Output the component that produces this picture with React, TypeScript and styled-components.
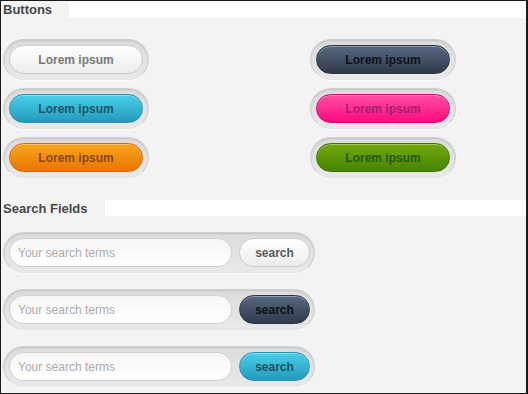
import styled, { createGlobalStyle, css } from "styled-components";

const Global = createGlobalStyle`
  html, body {
    margin: 0;
    padding: 0;
    background: #ffffff;
  }
  * {
    box-sizing: border-box;
  }
`;

const Page = styled.div`
  width: 528px;
  height: 394px;
  border: 1px solid #1a1a1a;
  border-right-width: 2px;
  background: #f3f3f3;
  font-family: "Liberation Sans", Arial, sans-serif;
  overflow: hidden;
`;

const Titulo = styled.h2<{ $topo: number }>`
  margin: ${(p) => p.$topo}px 0 0 0;
  height: ${(p) => (p.$topo ? 16 : 17)}px;
  background: #ffffff;
  font-size: 13px;
  font-weight: bold;
  line-height: ${(p) => (p.$topo ? 17 : 18)}px;
  color: #474747;
  span {
    display: inline-block;
    height: 100%;
    padding: 0 17px 0 2px;
    background: #f3f3f3;
  }
`;

const GradeBotoes = styled.div`
  display: grid;
  grid-template-columns: 146px 146px;
  justify-content: space-between;
  row-gap: 8px;
  padding: 21px 70px 0 2px;
`;

const Poco = styled.div`
  display: flex;
  align-items: center;
  height: 41px;
  padding: 5px;
  border-radius: 21px;
  border: 1px solid #cfcfcf;
  border-bottom-color: #e6e6e6;
  background: linear-gradient(#dcdcdc, #e9e9e9);
  box-shadow: inset 0 1px 2px rgba(0, 0, 0, 0.12), 0 1px 0 #fafafa;
`;

const cores = {
  branco: { de: "#ffffff", ate: "#ececec", borda: "#cdcdcd", texto: "#7a7a7a" },
  azul: { de: "#48d0ea", ate: "#2599bb", borda: "#2a93b3", texto: "#1d5669" },
  escuro: { de: "#566880", ate: "#2f3a4b", borda: "#2a3444", texto: "#0e1218" },
  rosa: { de: "#ff4ea3", ate: "#ff0a80", borda: "#e0006e", texto: "#a4216a" },
  laranja: { de: "#f8a61d", ate: "#ea7400", borda: "#d86a00", texto: "#8b4513" },
  verde: { de: "#72aa0c", ate: "#478400", borda: "#3e7400", texto: "#2c560a" },
};

type Cor = keyof typeof cores;

const estiloBotao = (cor: Cor) => css`
  border: 1px solid ${cores[cor].borda};
  background: linear-gradient(${cores[cor].de}, ${cores[cor].ate});
  color: ${cores[cor].texto};
  box-shadow: inset 0 1px 0 rgba(255, 255, 255, 0.35);
`;

const Botao = styled.button<{ $cor: Cor }>`
  flex: 1;
  height: 29px;
  border-radius: 15px;
  font-family: "Liberation Sans", Arial, sans-serif;
  font-size: 12px;
  font-weight: bold;
  cursor: pointer;
  padding: 0;
  ${(p) => estiloBotao(p.$cor)}
`;

const ListaBusca = styled.div`
  display: flex;
  flex-direction: column;
  gap: 16px;
  padding: 16px 0 0 2px;
`;

const PocoBusca = styled(Poco)`
  width: 312px;
  gap: 7px;
  padding: 5px 4px 5px 5px;
`;

const Campo = styled.input`
  width: 223px;
  height: 29px;
  border-radius: 15px;
  border: 1px solid #d2d2d2;
  background: linear-gradient(#f6f6f6, #ffffff);
  padding: 0 0 0 8px;
  font-family: "Liberation Sans", Arial, sans-serif;
  font-size: 12px;
  color: #444;
  outline: none;
  &::placeholder {
    color: #acacac;
  }
`;

const BotaoBusca = styled(Botao)`
  flex: 0 0 71px;
  ${(p) => p.$cor === "branco" && "color: #5a5a5a;"}
  ${(p) => p.$cor === "escuro" && "color: #0b0e12;"}
  ${(p) => p.$cor === "azul" && "color: #1c5264;"}
`;

const botoes: Cor[] = ["branco", "escuro", "azul", "rosa", "laranja", "verde"];
const buscas: Cor[] = ["branco", "escuro", "azul"];

export default function App() {
  return (
    <>
      <Global />
      <Page>
        <Titulo $topo={0}>
          <span>Buttons</span>
        </Titulo>
        <GradeBotoes>
          {botoes.map((cor) => (
            <Poco key={cor}>
              <Botao $cor={cor}>Lorem ipsum</Botao>
            </Poco>
          ))}
        </GradeBotoes>
        <Titulo $topo={22}>
          <span>Search Fields</span>
        </Titulo>
        <ListaBusca>
          {buscas.map((cor) => (
            <PocoBusca key={cor}>
              <Campo type="text" placeholder="Your search terms" />
              <BotaoBusca $cor={cor}>search</BotaoBusca>
            </PocoBusca>
          ))}
        </ListaBusca>
      </Page>
    </>
  );
}
